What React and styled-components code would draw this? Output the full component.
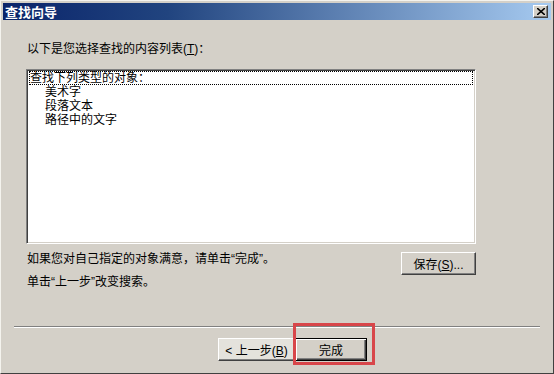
import React from "react";
import styled, { createGlobalStyle } from "styled-components";

const GlobalStyle = createGlobalStyle`
  html, body {
    margin: 0;
    padding: 0;
    background: #d4d0c8;
  }
  body {
    font-family: "Liberation Sans", "Noto Sans CJK SC", sans-serif;
    font-size: 12px;
    color: #000;
  }
`;

const Window = styled.div`
  position: relative;
  width: 554px;
  height: 374px;
  box-sizing: border-box;
  display: flex;
  flex-direction: column;
  background: #d4d0c8;
  border-style: solid;
  border-width: 1px;
  border-color: #f4f3ee #404040 #404040 #f4f3ee;
  padding: 2px;
`;

const TitleBar = styled.div`
  display: flex;
  align-items: center;
  height: 17px;
  padding-left: 2px;
  background: linear-gradient(to right, #0a246a 0%, #21447f 30%, #a6caf0 100%);
`;

const Title = styled.span`
  color: #fff;
  font-family: "Noto Sans CJK SC", sans-serif;
  font-weight: bold;
  font-size: 13px;
  line-height: 17px;
`;

const CloseButton = styled.button`
  margin-left: auto;
  margin-right: 3px;
  width: 15px;
  height: 13px;
  padding: 0;
  display: flex;
  align-items: center;
  justify-content: center;
  background: #d4d0c8;
  border: 1px solid;
  border-color: #fff #404040 #404040 #fff;
  box-shadow: inset -1px -1px #808080;
  svg {
    display: block;
  }
`;

const Body = styled.div`
  flex: 1;
  padding: 22px 0 0 23px;
  display: flex;
  flex-direction: column;
`;

const Label = styled.div`
  padding-left: 1px;
  line-height: 14px;
`;

const ListBox = styled.div`
  margin-top: 13px;
  width: 450px;
  height: 175px;
  box-sizing: border-box;
  background: #fff;
  border: 1px solid;
  border-color: #808080 #fff #fff #808080;
  box-shadow: inset 1px 1px #404040, inset -1px -1px #d4d0c8;
  padding: 1px 2px;
`;

const ListItem = styled.div`
  line-height: 14px;
  height: 14px;
  padding-left: ${({ $indent }) => ($indent ? 16 : 1)}px;
  outline: ${({ $focused }) => ($focused ? "1px dotted #000" : "none")};
  outline-offset: -1px;
  white-space: nowrap;
`;

const InfoRow = styled.div`
  margin-top: 8px;
  width: 450px;
  display: flex;
  justify-content: space-between;
  align-items: flex-start;
`;

const InfoText = styled.div`
  padding-left: 1px;
  p {
    margin: 0;
    line-height: 14px;
  }
  p + p {
    margin-top: 9px;
  }
`;

const Button = styled.button`
  width: ${({ $w }) => $w || 75}px;
  height: 23px;
  box-sizing: border-box;
  padding: 0;
  font-family: inherit;
  font-size: 12px;
  color: #000;
  background: ${({ $light }) => ($light ? "#e4e2dc" : "#d4d0c8")};
  border: 1px solid;
  border-color: #fff #404040 #404040 #fff;
  box-shadow: inset -1px -1px #808080;
  ${({ $default }) =>
    $default &&
    `
    border: 1px solid #000;
    box-shadow: inset 1px 1px #fff, inset -1px -1px #404040, inset -2px -2px #808080;
  `}
`;

const Separator = styled.div`
  margin: 0 11px;
  height: 0;
  border-top: 1px solid #808080;
  border-bottom: 1px solid #fff;
`;

const ButtonRow = styled.div`
  display: flex;
  margin: 10px 0 10px 215px;
`;

const Highlight = styled.div`
  position: absolute;
  left: 292px;
  top: 322px;
  width: 82px;
  height: 42px;
  box-sizing: border-box;
  border: 3px solid #d8464a;
  pointer-events: none;
`;

export default function App() {
  return (
    <>
      <GlobalStyle />
      <Window>
        <TitleBar>
          <Title>查找向导</Title>
          <CloseButton>
            <svg width="8" height="7" viewBox="0 0 8 7">
              <path d="M0 0 L8 7 M8 0 L0 7" stroke="#000" strokeWidth="1.6" />
            </svg>
          </CloseButton>
        </TitleBar>
        <Body>
          <Label>
            以下是您选择查找的内容列表(<u>T</u>)：
          </Label>
          <ListBox>
            <ListItem $focused>查找下列类型的对象：</ListItem>
            <ListItem $indent>美术字</ListItem>
            <ListItem $indent>段落文本</ListItem>
            <ListItem $indent>路径中的文字</ListItem>
          </ListBox>
          <InfoRow>
            <InfoText>
              <p>如果您对自己指定的对象满意，请单击“完成”。</p>
              <p>单击“上一步”改变搜索。</p>
            </InfoText>
            <Button>
              保存(<u>S</u>)...
            </Button>
          </InfoRow>
        </Body>
        <Separator />
        <ButtonRow>
          <Button $w={77} $light>
            &lt; 上一步(<u>B</u>)
          </Button>
          <Button $w={72} $default>
            完成
          </Button>
        </ButtonRow>
        <Highlight />
      </Window>
    </>
  );
}
